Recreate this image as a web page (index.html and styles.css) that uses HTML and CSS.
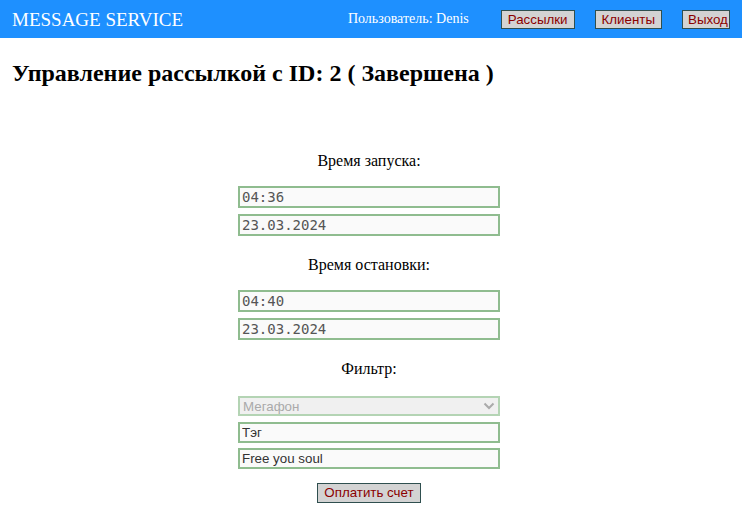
FILE: index.html
```html
<!DOCTYPE html>
<html lang="ru">
<head>
<meta charset="utf-8">
<title>Message Service</title>
<link rel="stylesheet" href="styles.css">
</head>
<body>
<header class="topbar">
  <div class="brand">MESSAGE SERVICE</div>
  <nav class="nav">
    <span class="user">Пользователь: Denis</span>
    <button class="nav-btn">Рассылки</button>
    <button class="nav-btn">Клиенты</button>
    <button class="nav-btn nav-exit">Выход</button>
  </nav>
</header>
<h2 class="title">Управление рассылкой с ID: 2 ( Завершена )</h2>
<form class="form">
  <p class="label">Время запуска:</p>
  <input class="field mono" type="text" value="04:36">
  <input class="field mono" type="text" value="23.03.2024">
  <p class="label">Время остановки:</p>
  <input class="field mono" type="text" value="04:40">
  <input class="field mono" type="text" value="23.03.2024">
  <p class="label">Фильтр:</p>
  <div class="select">
    <span>Мегафон</span>
    <svg width="12" height="8" viewBox="0 0 12 8"><path d="M1.5 1.5 L6 6 L10.5 1.5" fill="none" stroke="#aaa" stroke-width="2"/></svg>
  </div>
  <input class="field sans" type="text" value="Тэг">
  <input class="field sans" type="text" value="Free you soul">
  <button class="pay" type="button">Оплатить счет</button>
</form>
</body>
</html>
```
FILE: styles.css
```css
html, body {
  margin: 0;
  padding: 0;
  background: #fff;
  font-family: "Liberation Serif", serif;
}
.topbar {
  height: 38px;
  background: #1e90ff;
  display: flex;
  align-items: center;
  justify-content: space-between;
  padding: 0 12px 0 12px;
  color: #fff;
}
.brand {
  font-size: 19px;
  padding-top: 1px;
}
.nav {
  display: flex;
  align-items: center;
  gap: 20px;
}
.user {
  font-size: 14px;
  margin-right: 12px;
}
.nav-btn {
  font-family: "Liberation Sans", sans-serif;
  font-size: 13.33px;
  color: #8b0000;
  background: #d3d3d3;
  border: 1px solid #2f4f4f;
  padding: 0 6px;
  height: 19px;
  line-height: 15px;
  margin: 0;
}
.nav-exit {
  width: 48px;
  padding: 0 0 0 5px;
  text-align: left;
  overflow: hidden;
}
.title {
  font-size: 24px;
  font-weight: bold;
  margin: 21px 12px 0 12px;
  line-height: 28px;
}
.form {
  display: flex;
  flex-direction: column;
  align-items: center;
  padding-right: 4px;
  margin-top: 65px;
}
.label {
  font-size: 16px;
  line-height: 18px;
  margin: 0 0 16px 0;
}
.field {
  box-sizing: border-box;
  width: 262px;
  height: 22px;
  border: 2px solid #8fbc8f;
  background: #fafafa;
  color: #555;
  padding: 0 2px;
  margin: 0 0 6px 0;
  outline: none;
}
.field + .label {
  margin-top: 14px;
}
.mono {
  font-family: "DejaVu Sans Mono", monospace;
  font-size: 14px;
}
.sans {
  font-family: "Liberation Sans", sans-serif;
  font-size: 13.33px;
  color: #333;
  height: 21px;
  margin-bottom: 5px;
}
.select {
  box-sizing: border-box;
  width: 262px;
  height: 20px;
  border: 2px solid #b4d4b4;
  background: #f0f0f0;
  color: #aaa;
  font-family: "Liberation Sans", sans-serif;
  font-size: 13.33px;
  display: flex;
  align-items: center;
  justify-content: space-between;
  padding: 0 3px 0 3px;
  margin: 2px 0 6px 0;
}
.pay {
  margin-top: 9px;
  font-family: "Liberation Sans", sans-serif;
  font-size: 13.33px;
  color: #8b0000;
  background: #d3d3d3;
  border: 1px solid #2f4f4f;
  height: 20px;
  padding: 0 6px;
  line-height: 16px;
}
```
